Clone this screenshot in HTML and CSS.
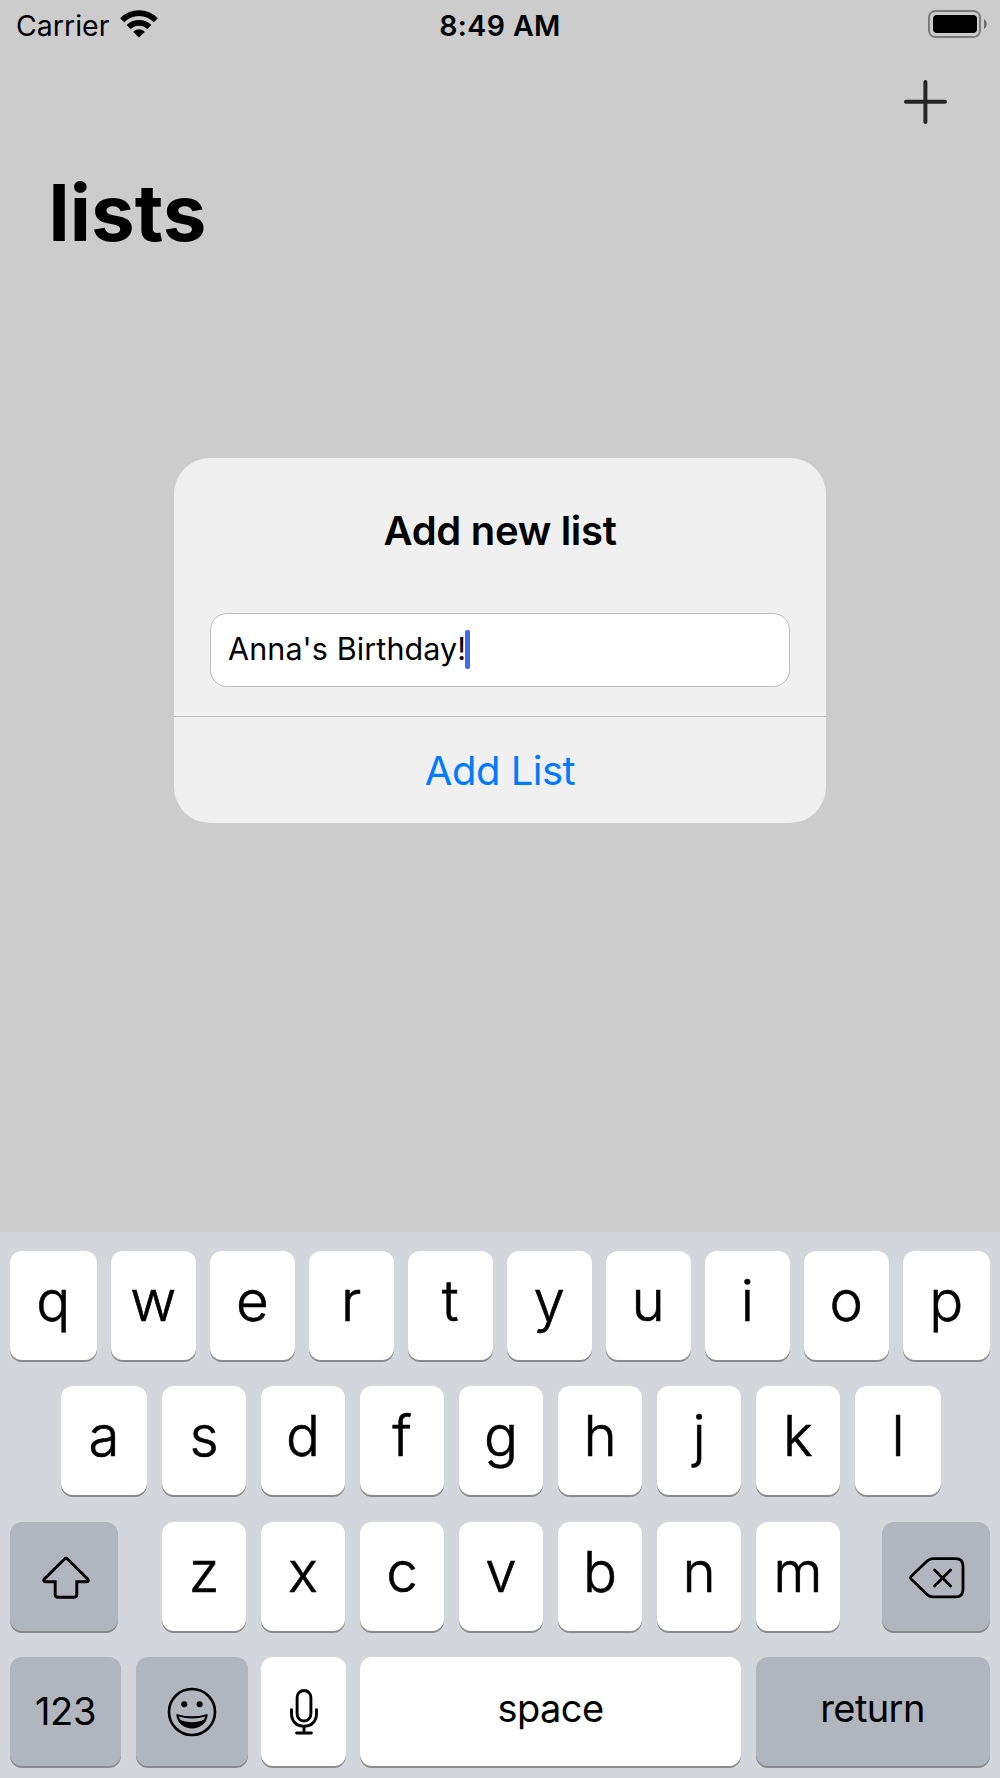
FILE: index.html
```html
<!DOCTYPE html>
<html lang="en">
<head>
<meta charset="utf-8">
<title>lists</title>
<link rel="stylesheet" href="styles.css">
</head>
<body>
<div class="screen">
  <header class="status">
    <div class="carrier"><span class="carrier-name">Carrier</span>
      <svg class="wifi" width="38" height="28" viewBox="0 0 38 28">
        <g fill="none" stroke="#000" stroke-width="5.8"><path d="M2.2 10.2C11.8 .8 26.2 .8 35.8 10.2"/><path d="M8.6 17C14.4 11.4 23.6 11.4 29.4 17"/></g>
        <path d="M13.2 22C16.4 18.2 21.6 18.2 24.8 22L19 27.4Z"/>
      </svg>
    </div>
    <div class="clock">8:49 AM</div>
    <svg class="battery" width="60" height="28" viewBox="0 0 60 28">
      <rect x="1" y="1" width="51" height="26" rx="6.5" fill="none" stroke="#7b7b7b" stroke-width="2"/>
      <rect x="5" y="5" width="44" height="18" rx="4"/>
      <path d="M56 9C59.6 11 59.6 17 56 19Z" fill="#6b6b6b"/>
    </svg>
  </header>
  <nav class="nav">
    <svg width="44" height="44" viewBox="0 0 44 44"><path d="M22.4 2V42M3 21.8H42" stroke="#262626" stroke-width="4" stroke-linecap="round"/></svg>
  </nav>
  <h1 class="title"><span>lists</span></h1>
  <main class="content">
    <section class="alert">
      <h2 class="alert-title"><span>Add new list</span></h2>
      <div class="field"><span class="field-text">Anna's Birthday!</span><i class="caret"></i></div>
      <div class="action"><span>Add List</span></div>
    </section>
  </main>
  <div class="keyboard">
    <div class="row row-top">
      <div class="key edge"><span>q</span></div><div class="key"><span>w</span></div><div class="key"><span>e</span></div><div class="key"><span>r</span></div><div class="key"><span>t</span></div><div class="key"><span>y</span></div><div class="key"><span>u</span></div><div class="key"><span>i</span></div><div class="key"><span>o</span></div><div class="key edge"><span>p</span></div>
    </div>
    <div class="row row-home">
      <div class="key edge"><span>a</span></div><div class="key"><span>s</span></div><div class="key"><span>d</span></div><div class="key"><span>f</span></div><div class="key"><span>g</span></div><div class="key"><span>h</span></div><div class="key"><span>j</span></div><div class="key"><span>k</span></div><div class="key edge"><span>l</span></div>
    </div>
    <div class="row row-bottom">
      <div class="key dark modifier shift">
        <svg width="48" height="43" viewBox="0 0 48 43"><path d="M24 2.3Q24.8 2.3 25.7 3.2L45.3 22.6C47 24.3 46.4 25.8 44.4 25.8H34.8V38.3Q34.8 41.3 31.8 41.3H16.2Q13.2 41.3 13.2 38.3V25.8H3.6C1.6 25.8 1 24.3 2.7 22.6L22.3 3.2Q23.2 2.3 24 2.3Z" fill="none" stroke="#000" stroke-width="2.9"/></svg>
      </div>
      <div class="letters"><div class="key"><span>z</span></div><div class="key"><span>x</span></div><div class="key"><span>c</span></div><div class="key"><span>v</span></div><div class="key"><span>b</span></div><div class="key"><span>n</span></div><div class="key"><span>m</span></div></div>
      <div class="key dark modifier delete">
        <svg width="56" height="42" viewBox="0 0 56 42"><g fill="none" stroke="#000" stroke-width="2.8" stroke-linecap="round" stroke-linejoin="round"><path d="M2.3 19.2L18.4 3.8Q20.8 1.6 24 1.6H46.5Q54 1.6 54 9.1V32.4Q54 39.9 46.5 39.9H24Q20.8 39.9 18.4 37.7L2.3 22.3Q.9 20.8 2.3 19.2Z"/><path d="M25.6 13L41.6 29M41.6 13L25.6 29"/></g></svg>
      </div>
    </div>
    <div class="row row-space">
      <div class="key dark numbers"><span class="label">123</span></div>
      <div class="key dark emoji">
        <svg width="50" height="50" viewBox="0 0 50 50"><circle cx="25" cy="25" r="23" fill="none" stroke="#000" stroke-width="2.6"/><circle cx="17.2" cy="17.2" r="3"/><circle cx="32.6" cy="17.2" r="3"/><path d="M10.2 28C20 31 30 31 39.8 28C39 36 32 40.6 25 40.6S11 36 10.2 28Z" fill="#000" stroke="#000" stroke-width="1.8" stroke-linejoin="round"/><path d="M11.8 29.6C20 32.2 30 32.2 38.2 29.6C37.8 31.2 37.2 32.2 36.4 33C28 36 22 36 13.6 33C12.8 32.2 12.2 31.2 11.8 29.6Z" fill="#b1b5be"/></svg>
      </div>
      <div class="key mic">
        <svg width="28" height="46" viewBox="0 0 28 46"><g fill="none" stroke="#000" stroke-width="2.9" stroke-linecap="round"><rect x="7.1" y="1.5" width="13.8" height="30.5" rx="6.9"/><path d="M1.5 20.6V24.5C1.5 32.5 6.7 37.2 14 37.2S26.5 32.5 26.5 24.5V20.6M14 37.2V44M6.6 44H21.4"/></g></svg>
      </div>
      <div class="key space"><span class="label">space</span></div>
      <div class="key dark return"><span class="label">return</span></div>
    </div>
  </div>
</div>
</body>
</html>
```
FILE: styles.css
```css
* { box-sizing: border-box; }
body { margin: 0; background: #ccc; color: #000; font-family: Inter, "Liberation Sans", sans-serif; }
svg { display: block; flex: none; }
span { white-space: nowrap; }
.screen { width: 1000px; height: 1778px; display: flex; flex-direction: column; overflow: hidden; background: #ccc; }
.status { height: 50px; padding: 10px 12px 0 12px; display: grid; grid-template-columns: 1fr auto 1fr; align-items: start; }
.carrier { display: flex; gap: 11px; padding-left: 4px; font-size: 28.5px; line-height: 31px; }
.carrier-name { width: 93px; }
.clock { font-size: 28.5px; line-height: 31px; font-weight: 600; letter-spacing: .4px; }
.battery { justify-self: end; }
.nav { height: 104px; padding: 29.5px 53px 0 0; display: flex; justify-content: flex-end; }
.title { margin: 0; height: 120px; padding-left: 48.5px; font-size: 78px; line-height: 118px; font-weight: 700; letter-spacing: .1px; }
.content { flex: 1; display: flex; justify-content: center; padding-top: 184px; }
.alert { width: 652px; height: 365px; border-radius: 36px; background: #f0f0f0; display: flex; flex-direction: column; overflow: hidden; }
.alert-title { margin: 0; flex: none; height: 155px; font-size: 40px; line-height: 145px; font-weight: 600; text-align: center; letter-spacing: -.3px; }
.field { flex: none; margin: 0 36px; height: 74px; padding: 0 0 2px 17px; display: flex; align-items: center; background: #fff; border: 1px solid #bcbdbd; border-radius: 17px; font-size: 30.5px; line-height: 70px; letter-spacing: .1px; }
.field-text { width: 237px; }
.caret { flex: none; width: 5px; height: 39px; border-radius: 2px; background: #4169ed; }
.action { margin-top: 29px; flex: 1; border-top: 1px solid #bdbebe; color: #007aff; font-size: 40px; line-height: 108px; text-align: center; letter-spacing: -.5px; }
.keyboard { height: 546px; padding: 19px 10px 0; display: flex; flex-direction: column; gap: 26.3px; background: #d3d6db; }
.row { display: flex; flex: none; height: 109px; }
.key { flex: none; width: 84.5px; height: 109px; display: flex; align-items: center; justify-content: center; border-radius: 12px; background: #fff; box-shadow: 0 2px 0 #898a8e; font-size: 56.5px; font-weight: 300; line-height: 90px; -webkit-text-stroke: .6px #000; }
.key > span { padding-bottom: 9px; }
.edge { width: 86.5px; }
.dark { background: #b1b5be; }
.row-top { gap: 14.5px; }
.row-home { gap: 14.5px; padding-left: 50.8px; }
.row-bottom { justify-content: space-between; }
.letters { display: flex; gap: 14.5px; padding-left: 2px; }
.modifier { width: 108px; }
.shift { padding: 2px 0 0 3px; }
.delete { padding: 3px 0 0 1px; }
.row-space { gap: 14.5px; }
.key > .label { font-size: 38px; font-weight: 400; line-height: 60px; padding-bottom: 6px; letter-spacing: -.6px; -webkit-text-stroke: 0; }
.numbers { width: 111px; }
.key.numbers > .label { padding-bottom: 1px; letter-spacing: -.3px; }
.emoji { width: 112px; margin-right: -1px; padding: 1px 0 0 1px; }
.mic { padding: 2px 0 0 2px; }
.space { width: 381px; }
.return { width: 234px; }
```
